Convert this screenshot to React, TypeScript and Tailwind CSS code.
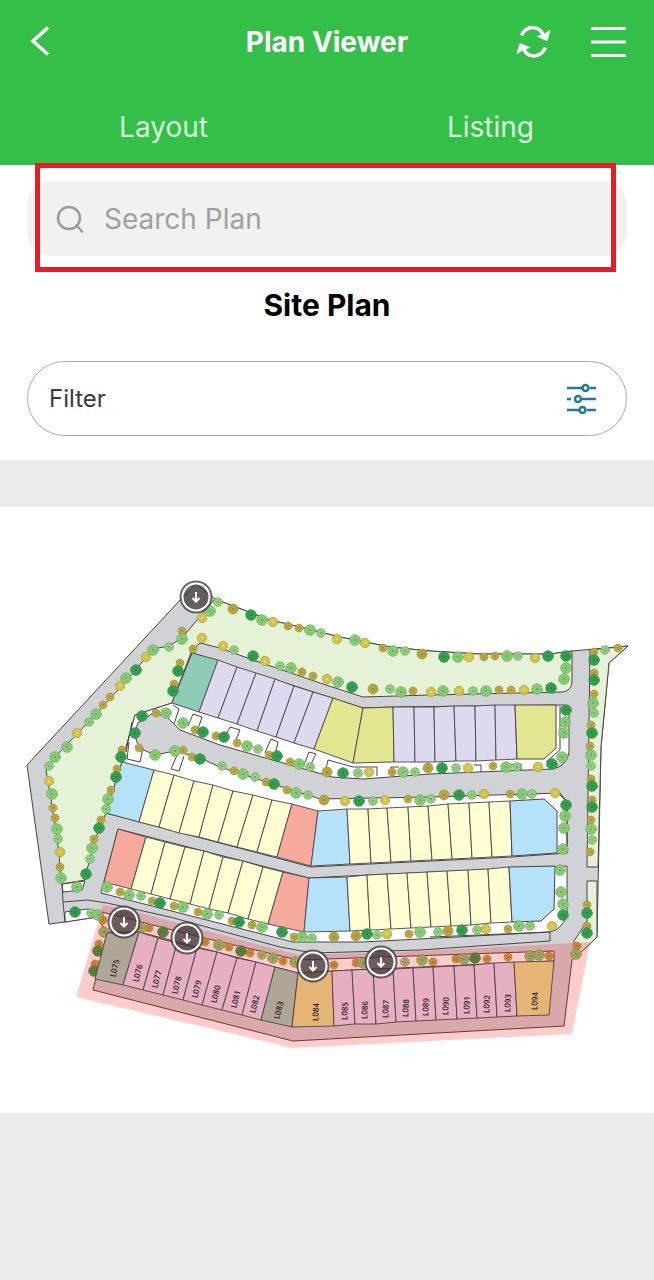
type LotGroup = {
  fill: string
  top: string
  bottom: string
}

type Label = {
  id: string
  x: number
  y: number
  angle: number
}

type TreeGroup = {
  radius: number
  edge: string
  fill: string
  core: string
  points: string
}

// Each group is a row of lots: n+1 points along the top edge, n+1 along the bottom
const UPPER_LOTS: LotGroup[] = [
  { fill: '#8dcbb5', top: '192,653 218,660', bottom: '172,703 199,712' },
  {
    fill: '#ddd9ee',
    top: '218,660 237,667 256,673 275,679 294,686 313,692 333,698',
    bottom: '199,712 218,718 237,724 257,731 276,737 294,743 314,749',
  },
  { fill: '#e2e690', top: '333,698 363,708 393,707', bottom: '314,749 353,763 394,762' },
  {
    fill: '#ddd9ee',
    top: '393,707 414,707 434,707 454,706 475,706 495,705 515,705',
    bottom: '394,762 415,762 435,762 456,761 476,761 496,760 517,759',
  },
  { fill: '#b5e2f8', top: '122,762 154,770', bottom: '106,813 139,822' },
  {
    fill: '#fffdd2',
    top: '154,770 174,775 194,781 213,785 233,791 253,795 272,800 292,804',
    bottom: '139,822 159,827 179,833 199,837 218,842 237,847 257,852 277,857',
  },
  { fill: '#f6aa9e', top: '292,804 318,811', bottom: '277,857 311,866' },
  { fill: '#b5e2f8', top: '318,811 347,809', bottom: '311,866 350,864' },
  {
    fill: '#fffdd2',
    top: '347,809 368,809 387,808 408,807 428,806 448,804 469,803 489,802 510,801',
    bottom: '350,864 371,863 391,862 411,861 432,860 452,859 472,858 492,857 512,856',
  },
  { fill: '#f6aa9e', top: '118,829 146,837', bottom: '104,882 131,889' },
  {
    fill: '#fffdd2',
    top: '146,837 165,842 185,847 204,851 223,857 243,861 263,867 283,872',
    bottom: '131,889 151,894 170,899 190,904 209,909 228,913 248,919 268,924',
  },
  { fill: '#f6aa9e', top: '283,872 309,878', bottom: '268,924 304,932' },
  { fill: '#b5e2f8', top: '309,878 347,877', bottom: '304,932 350,931' },
  {
    fill: '#fffdd2',
    top: '347,877 367,875 387,874 407,873 427,872 447,871 468,870 488,869 509,867',
    bottom: '350,931 370,930 391,929 411,928 431,927 451,926 471,925 491,923 512,922',
  },
]

const SELECTED_LOTS: LotGroup[] = [
  { fill: '#b0a697', top: '107,933 139,932', bottom: '95,979 123,985' },
  {
    fill: '#e6afc2',
    top: '139,932 158,938 177,943 197,948 217,952 237,958 256,962 275,967',
    bottom: '123,985 143,990 163,995 183,1000 202,1005 222,1010 242,1015 261,1020',
  },
  { fill: '#b0a697', top: '275,967 298,973', bottom: '261,1020 292,1027' },
  { fill: '#e6b575', top: '298,973 332,971', bottom: '292,1027 334,1026' },
  {
    fill: '#e6afc2',
    top: '332,971 352,970 373,969 393,969 413,968 433,967 454,966 474,965 494,963 514,962',
    bottom: '334,1026 355,1024 376,1024 396,1022 416,1021 436,1020 457,1019 477,1018 497,1017 517,1016',
  },
  { fill: '#e6b575', top: '514,962 554,961', bottom: '517,1016 549,1015' },
]

const LABELS: Label[] = [
  { id: 'L075', x: 114, y: 968, angle: -76 },
  { id: 'L076', x: 137, y: 973, angle: -76 },
  { id: 'L077', x: 156, y: 979, angle: -76 },
  { id: 'L078', x: 176, y: 985, angle: -76 },
  { id: 'L079', x: 196, y: 989, angle: -76 },
  { id: 'L080', x: 215, y: 994, angle: -76 },
  { id: 'L081', x: 235, y: 999, angle: -76 },
  { id: 'L082', x: 254, y: 1004, angle: -76 },
  { id: 'L083', x: 278, y: 1010, angle: -76 },
  { id: 'L084', x: 315, y: 1012, angle: -88 },
  { id: 'L085', x: 344, y: 1011, angle: -88 },
  { id: 'L086', x: 364, y: 1010, angle: -88 },
  { id: 'L087', x: 385, y: 1009, angle: -88 },
  { id: 'L088', x: 405, y: 1008, angle: -88 },
  { id: 'L089', x: 425, y: 1007, angle: -88 },
  { id: 'L090', x: 445, y: 1006, angle: -88 },
  { id: 'L091', x: 466, y: 1005, angle: -88 },
  { id: 'L092', x: 486, y: 1004, angle: -88 },
  { id: 'L093', x: 507, y: 1003, angle: -88 },
  { id: 'L094', x: 534, y: 1001, angle: -88 },
]

const TREES: TreeGroup[] = [
  {
    // small olive shrubs
    radius: 4.4,
    edge: '#9c9338',
    fill: '#c0ac49',
    core: '#8c7f25',
    points:
      '182,631 110,697 103,705 193,649 180,663 174,684 156,713 195,730 216,736 237,743 139,748 183,750 192,757 122,750 288,626 299,628 383,648 302,672 313,676 413,691 269,755 290,762 392,772 234,771 266,782 287,790 408,799 484,657 495,656 511,690 499,690 493,766 510,794 508,929 618,648 594,652 594,673 594,694 591,725 590,746 591,779 592,800 591,820 590,852 587,905 587,926 577,946 53,808 55,818 60,867 94,839 101,820 111,790 117,769 120,892 152,901 174,906 198,912 232,921 252,925 294,937 409,934 99,944 95,964 103,920 149,928 205,942 229,947 250,953 283,961 334,965 356,963 433,962 456,959 487,959 508,957 549,956',
  },
  {
    // large olive
    radius: 5.4,
    edge: '#9c9338',
    fill: '#b9a842',
    core: '#837822',
    points: '233,609 422,654 373,689 327,772 428,768 324,800 444,795 448,931 334,937 356,936',
  },
  {
    // yellow
    radius: 5.2,
    edge: '#b0a43a',
    fill: '#cfc24a',
    core: '#efe58c',
    points:
      '202,618 146,657 120,686 77,733 202,638 223,646 273,622 337,639 365,643 265,661 327,679 431,692 369,772 345,801 385,800 469,657 535,658 524,690 459,691 538,767 468,768 555,793 484,794 552,926 486,929 49,781 60,852 387,934',
  },
  {
    // small light green
    radius: 4.8,
    edge: '#62ae59',
    fill: '#9ad184',
    core: '#579f4c',
    points:
      '218,602 169,647 89,722 234,650 321,633 405,651 280,666 390,689 258,749 310,767 358,773 415,772 222,766 255,777 308,795 373,801 431,799 518,656 473,691 517,767 456,768 532,794 472,795 530,926 477,930 438,932 605,650 594,713 591,766 592,840 49,766 58,839 90,859 106,809 141,896 219,915 312,938 377,935 91,913 262,955 405,962',
  },
  {
    // large light green
    radius: 5.8,
    edge: '#62ae59',
    fill: '#8ecb78',
    core: '#4b9944',
    points:
      '210,611 182,639 153,650 126,678 96,714 67,747 55,757 166,713 183,723 155,755 175,751 262,620 310,630 355,640 393,651 291,668 338,682 401,692 247,746 299,764 403,772 243,774 296,793 420,800 458,657 507,656 566,668 564,679 537,689 486,691 443,691 565,722 564,733 562,757 506,767 522,794 565,816 564,828 563,849 560,870 561,892 563,904 519,926 593,703 591,755 591,829 576,954 52,794 57,829 61,878 77,887 92,848 108,799 107,887 129,895 183,907 207,914 262,927 302,937 420,932 98,915 104,932 141,928 219,945 273,958 295,962 363,963 422,960 464,959 530,956 539,955',
  },
  {
    // dark green
    radius: 5.8,
    edge: '#2a8c41',
    fill: '#379f51',
    core: '#167337',
    points:
      '136,670 178,671 173,691 142,716 203,732 224,737 135,733 200,759 121,757 251,615 253,656 352,687 277,756 343,773 274,784 359,801 444,657 548,656 566,656 551,688 566,710 552,764 442,768 459,795 566,805 563,915 462,930 594,660 594,680 592,733 592,786 592,807 587,913 587,933 86,874 99,828 116,777 160,903 239,922 282,932 367,934 75,912 98,951 94,971 163,932 241,951 475,958',
  },
]

const MARKERS = [
  [196, 597],
  [124, 922],
  [187, 938],
  [313, 966],
  [381, 962],
]

const DRIVEWAYS = [
  'M173 705L179 709L174 724',
  'M188 726L193 714L202 717L198 729',
  'M225 737L230 727L240 730L235 742',
  'M265 753L271 739L278 742L276 751',
  'M304 765L309 752L316 754L311 764',
  'M325 773L328 760L353 767L377 767L377 776',
  'M390 775L391 767L399 767',
  'M474 765L481 765L481 772',
  'M508 765L521 764L521 770',
  'M129 742L127 759L140 762L143 748',
  'M178 753L171 769L179 771L184 756',
]

function toPoints(list: string): string[] {
  return list.split(' ')
}

function LotRow({ group }: { group: LotGroup }) {
  const top = toPoints(group.top)
  const bottom = toPoints(group.bottom)
  return (
    <g fill={group.fill} stroke="#4a4346" strokeWidth="0.9">
      {top.slice(0, -1).map((point, i) => (
        <polygon key={point} points={`${point} ${top[i + 1]} ${bottom[i + 1]} ${bottom[i]}`} />
      ))}
    </g>
  )
}

function Trees({ group }: { group: TreeGroup }) {
  return (
    <g>
      {toPoints(group.points).map((point) => {
        const [x, y] = point.split(',').map(Number)
        return (
          <g key={point}>
            <circle
              cx={x}
              cy={y}
              r={group.radius - 0.5}
              fill={group.fill}
              stroke={group.edge}
              strokeWidth="1"
              strokeDasharray="2 0.6"
            />
            <circle
              cx={x}
              cy={y}
              r={group.radius * 0.5}
              fill="none"
              stroke={group.core}
              strokeOpacity="0.4"
              strokeDasharray="1 1.2"
            />
            <circle cx={x} cy={y} r="1" fill={group.core} fillOpacity="0.8" />
          </g>
        )
      })}
    </g>
  )
}

function SitePlan() {
  return (
    <svg viewBox="0 507 654 606" className="block w-full bg-white" role="img" aria-label="Site plan">
      {/* Roads */}
      <path
        d="M182 598L27 765L49 924L65 922L97 917L107 933L93 990L293 1041L564 1026L572 960L597 937L601 747L609 663L628 646L572 651L550 654H480L430 651L390 647L340 637L300 627L270 620L215 599L196 584Z"
        fill="#d0d2d6"
        stroke="#4a4346"
      />

      {/* Green areas */}
      <g fill="#e6f2d8" stroke="#4a4346" strokeWidth="1">
        <path d="M202 614L182 638L169 646L153 649L146 657L136 670L97 713L55 757L46 770L50 793L57 837L62 884L85 880L86 873L99 828L106 813L122 762L135 715L172 703L192 650L200 643L220 648L253 660L320 683L363 697L430 695L563 692Q572 690 572 682V651L550 654H480L430 651L390 647L340 637L300 627L270 620L215 599Z" />
        <path d="M590 650L628 646L609 663L601 747L598 867H587Z" />
        <path d="M587 881H597V937L575 958L574 941L587 921Z" />
      </g>

      {/* Verges */}
      <g fill="#fff" stroke="#4a4346" strokeWidth="1">
        <path d="M192 653L363 708L393 707L563 705Q569 705 569 711V752Q566 767 552 769L558 793L567 802V853L512 857L350 865L311 867L106 813L122 762L135 715L172 703Z" />
        <path d="M118 829L309 878L347 876L567 866V914Q562 930 550 932L363 942H293L101 893Z" />
        <path d="M62 884L85 881L82 890L63 892Z" />
        <path d="M65 912L88 909L110 914L200 937L298 960L554 951V961L332 971L298 973L139 932H107L97 917L65 922Z" />
      </g>

      {/* Turning circle and middle road */}
      <path
        d="M134 733L138 723L153 713L167 717L180 730L220 745L332 777L363 779L430 774L552 769L572 750V804L567 802L560 793L430 797L320 799L220 767L200 758L175 751L155 755L139 748Z"
        fill="#d0d2d6"
      />
      <path
        d="M567 853V802L560 793L430 797L320 799L220 767L200 758L175 751L155 755L139 748L134 733L138 723L153 713L167 717L180 730L220 745L332 777L363 779L430 774L552 769Q566 767 569 753"
        fill="none"
        stroke="#4a4346"
      />

      {/* Road edges */}
      <g fill="none" stroke="#4a4346" strokeWidth="1">
        <path d="M62 884L63 902L65 922M63 902L87 900L107 903L170 917L280 947L313 953L420 950L550 941V932L430 937" />
        <path d="M132 722L126 752" />
        {DRIVEWAYS.map((d) => (
          <path key={d} d={d} />
        ))}
      </g>

      {UPPER_LOTS.map((group) => (
        <LotRow key={group.top} group={group} />
      ))}

      {/* Corner lots with a cut edge */}
      <g stroke="#4a4346" strokeWidth="1">
        <path d="M515 705L556 705V748L544 759H517Z" fill="#e2e690" />
        <path d="M510 801L544 799L557 811V853L512 856Z" fill="#b5e2f8" />
        <path d="M509 867L555 866L554 909L541 921L512 922Z" fill="#b5e2f8" />
        <path d="M560 706V750L546 762" fill="none" />
      </g>

      {TREES.map((group) => (
        <Trees key={group.points} group={group} />
      ))}

      {/* Highlighted phase */}
      <path
        d="M103 905L137 912L193 927L260 945L300 955L397 952L480 948L590 942L572 1034L293 1048L76 997Z"
        fill="#ff0000"
        fillOpacity="0.2"
      />
      {SELECTED_LOTS.map((group) => (
        <LotRow key={group.top} group={group} />
      ))}

      <g
        fill="#2b2226"
        fontFamily="'Open Sans', 'Noto Sans', sans-serif"
        fontSize="8"
        fontWeight="600"
        textAnchor="middle"
      >
        {LABELS.map((label) => (
          <text
            key={label.id}
            transform={`translate(${label.x} ${label.y}) rotate(${label.angle})`}
            dominantBaseline="central"
          >
            {label.id}
          </text>
        ))}
      </g>

      {MARKERS.map(([x, y]) => (
        <g key={`${x}-${y}`} transform={`translate(${x} ${y})`}>
          <circle r="16.5" fill="#3d3638" fillOpacity="0.75" />
          <circle r="13.5" fill="none" stroke="#fff" strokeWidth="2" />
          <path d="M0 -5V4.500M-3.500 1L0 4.500L3.500 1" fill="none" stroke="#fff" strokeWidth="2" />
        </g>
      ))}
    </svg>
  )
}

function Header() {
  return (
    <header className="bg-[#34bf49] text-white">
      <div className="grid h-[84px] grid-cols-[1fr_auto_1fr] items-center px-7">
        <button type="button" aria-label="Back" className="justify-self-start">
          <svg width="24" height="32" viewBox="0 0 24 32" fill="none" stroke="currentColor" strokeWidth="3.5">
            <path d="M20 1.500L5 15L20 28.500" />
          </svg>
        </button>
        <h1 className="text-[28px] font-bold">Plan Viewer</h1>
        <div className="flex items-center gap-10 justify-self-end">
          <button type="button" aria-label="Refresh">
            <svg width="35" height="34" viewBox="0 0 34 34" fill="none" stroke="currentColor" strokeWidth="3.5">
              <path d="M5 10.500C10 -0.500 24 0 27.500 12" />
              <path d="M29 22.500C24 33.500 10 34 6.500 22" />
              <path d="M21 11.500L30.500 15.500L33.500 5.500L28 9Z" fill="currentColor" strokeWidth="1" />
              <path d="M13 22.500L3.500 18.500L0.500 28.500L6 25Z" fill="currentColor" strokeWidth="1" />
            </svg>
          </button>
          <button type="button" aria-label="Menu">
            <svg width="35" height="32" viewBox="0 0 35 32" stroke="currentColor" strokeWidth="3">
              <path d="M0 2.500H35M0 16H35M0 29.500H35" />
            </svg>
          </button>
        </div>
      </div>
      <nav className="grid h-[81px] grid-cols-2 pt-1 text-[28px] text-[#dcf5df]">
        <a href="#layout" className="flex items-center justify-center">
          Layout
        </a>
        <a href="#listing" className="flex items-center justify-center">
          Listing
        </a>
      </nav>
    </header>
  )
}

export default function App() {
  return (
    <div className="min-h-screen bg-[#ebebeb] font-['Inter','Open_Sans',sans-serif]">
      <Header />

      <section className="relative bg-white px-[27px] pt-4 pb-6">
        {/* Callout around the search box */}
        <div className="pointer-events-none absolute -top-0.5 right-[38px] left-[35px] h-[109px] border-[5px] border-[#e81c24]" />

        <label className="flex h-[75px] items-center gap-5 rounded-3xl bg-[#f1f1f1] px-[29px]">
          <svg width="28" height="28" viewBox="0 0 28 28" fill="none" stroke="#9b9b9b" strokeWidth="2.5">
            <circle cx="13" cy="13" r="11" />
            <path d="M20.500 20.500L26 26.500" strokeLinecap="round" />
          </svg>
          <input
            type="text"
            aria-label="Search plan"
            placeholder="Search Plan"
            className="min-w-0 flex-1 bg-transparent text-[28px] outline-none placeholder:text-[#a0a0a0]"
          />
        </label>

        <h2 className="mt-8 mb-[39px] text-center text-[30px] leading-[34px] font-bold text-black">Site Plan</h2>

        <button
          type="button"
          className="flex h-[75px] w-full items-center justify-between rounded-full border border-[#a9a9a9] pr-[29px] pl-[21px] text-2xl text-[#3a3a3a]"
        >
          Filter
          <svg width="30" height="32" viewBox="0 0 30 32" fill="none" stroke="#217c93" strokeWidth="2.5">
            <path d="M0 5H15M23 5H29M0 16H4M15 16H29M0 27H12M20 27H29" />
            <circle cx="18.500" cy="5" r="3" />
            <circle cx="11" cy="16" r="3" />
            <circle cx="15.500" cy="27" r="3" />
          </svg>
        </button>
      </section>

      <main className="pt-[47px]">
        <SitePlan />
      </main>
    </div>
  )
}
